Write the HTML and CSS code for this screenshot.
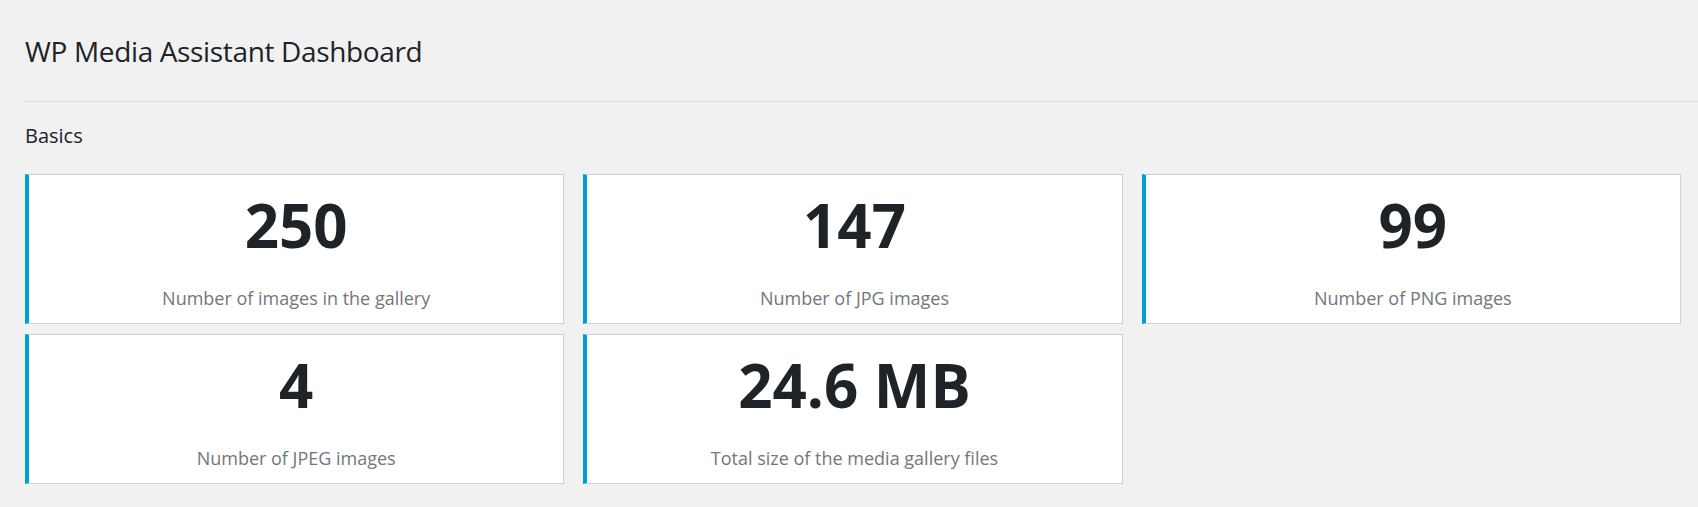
FILE: index.html
```html
<!DOCTYPE html>
<html lang="en">
<head>
<meta charset="utf-8">
<title>WP Media Assistant Dashboard</title>
<link rel="stylesheet" href="styles.css">
</head>
<body>
<div class="wrap">
  <h1 class="page-title">WP Media Assistant Dashboard</h1>
  <hr class="divider">
  <h2 class="section-title">Basics</h2>
  <div class="stats">
    <div class="stat-card">
      <div class="stat-value">250</div>
      <div class="stat-label">Number of images in the gallery</div>
    </div>
    <div class="stat-card">
      <div class="stat-value">147</div>
      <div class="stat-label">Number of JPG images</div>
    </div>
    <div class="stat-card">
      <div class="stat-value">99</div>
      <div class="stat-label">Number of PNG images</div>
    </div>
    <div class="stat-card">
      <div class="stat-value">4</div>
      <div class="stat-label">Number of JPEG images</div>
    </div>
    <div class="stat-card">
      <div class="stat-value">24.6 MB</div>
      <div class="stat-label">Total size of the media gallery files</div>
    </div>
  </div>
</div>
</body>
</html>
```

FILE: styles.css
```css
html, body {
  margin: 0;
  padding: 0;
}

body {
  background: #f1f1f1;
  font-family: "Open Sans", "Noto Sans", "DejaVu Sans", sans-serif;
  color: #1d2327;
}

.wrap {
  padding: 31px 0 0 25px;
}

.page-title {
  margin: 0;
  font-size: 28px;
  line-height: 40px;
  letter-spacing: -0.35px;
  font-weight: 400;
  color: #1d2327;
}

.divider {
  margin: 30px 0 0 0;
  border: 0;
  height: 1px;
  background: #dcdcde;
}

.section-title {
  margin: 20px 0 0 0;
  font-size: 20px;
  line-height: 28px;
  font-weight: 400;
  color: #1d2327;
}

.stats {
  margin: 24px 17px 0 0;
  display: grid;
  grid-template-columns: repeat(3, 1fr);
  column-gap: 19px;
  row-gap: 10px;
}

.stat-card {
  background: #fff;
  border: 1px solid #ccd0d4;
  border-left: 4px solid #00a0d2;
  padding: 10px 10px 13px;
  text-align: center;
}

.stat-value {
  font-size: 60px;
  line-height: 80px;
  font-weight: 700;
  color: #1d2327;
}

.stat-label {
  margin-top: 21px;
  font-size: 18px;
  line-height: 24px;
  color: #72777c;
}
```
